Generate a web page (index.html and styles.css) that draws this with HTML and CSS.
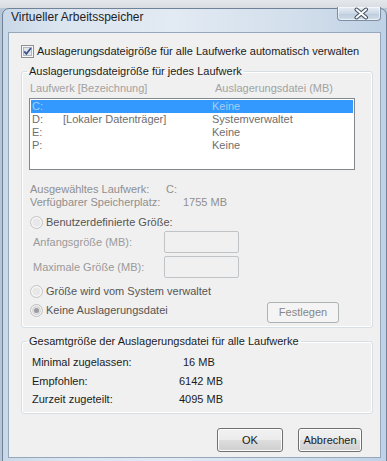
FILE: index.html
```html
<!DOCTYPE html>
<html lang="de">
<head>
<meta charset="UTF-8">
<meta name="viewport" content="width=device-width, initial-scale=1.0">
<title>Virtueller Arbeitsspeicher</title>
<link rel="stylesheet" href="styles.css">
</head>
<body>
<div class="window">
  <div class="titlebar">
    <span class="title">Virtueller Arbeitsspeicher</span>
    <div class="close-btn">
      <svg width="44" height="14" viewBox="0 0 44 14">
        <path d="M19.5 2.5 L29 10.5 M29 2.5 L19.5 10.5" stroke="#3d4c5e" stroke-width="4" stroke-linecap="round"/>
        <path d="M19.5 2.5 L29 10.5 M29 2.5 L19.5 10.5" stroke="#fff" stroke-width="2" stroke-linecap="round"/>
      </svg>
    </div>
  </div>

  <div class="client">
    <div class="check-row">
      <svg class="checkbox" width="13" height="13" viewBox="0 0 13 13">
        <rect x="0.5" y="0.5" width="12" height="12" fill="#f7f7f7" stroke="#8e8f8f"/>
        <rect x="2.5" y="2.5" width="8" height="8" fill="#e2e5ea" stroke="#b4b8be"/>
        <path d="M3.2 6.3 L5.4 8.9 L10 3" fill="none" stroke="#3e5490" stroke-width="1.8"/>
      </svg>
      <span>Auslagerungsdateigröße für alle Laufwerke automatisch verwalten</span>
    </div>

    <fieldset class="group drives">
      <legend>Auslagerungsdateigröße für jedes Laufwerk</legend>
      <div class="list-head">
        <span class="head-drive">Laufwerk [Bezeichnung]</span>
        <span>Auslagerungsdatei (MB)</span>
      </div>
      <div class="listbox">
        <div class="row selected"><span class="c-letter">C:</span><span class="c-label"></span><span>Keine</span></div>
        <div class="row"><span class="c-letter">D:</span><span class="c-label">[Lokaler Datenträger]</span><span>Systemverwaltet</span></div>
        <div class="row"><span class="c-letter">E:</span><span class="c-label"></span><span>Keine</span></div>
        <div class="row"><span class="c-letter">P:</span><span class="c-label"></span><span>Keine</span></div>
      </div>

      <div class="info">
        <div><span class="lbl-drive">Ausgewähltes Laufwerk:</span>C:</div>
        <div><span class="lbl-space">Verfügbarer Speicherplatz:</span>1755 MB</div>
      </div>

      <div class="radio-row custom">
        <svg class="radio" width="13" height="13" viewBox="0 0 13 13">
          <circle cx="6.5" cy="6.5" r="6" fill="#f5f5f5" stroke="#c3c3c3"/>
          <circle cx="6.5" cy="6.5" r="4" fill="#e8e8e8"/>
        </svg>
        <span>Benutzerdefinierte Größe:</span>
      </div>
      <div class="size-row first">
        <span class="size-label">Anfangsgröße (MB):</span>
        <span class="textbox"></span>
      </div>
      <div class="size-row">
        <span class="size-label">Maximale Größe (MB):</span>
        <span class="textbox"></span>
      </div>
      <div class="radio-row system">
        <svg class="radio" width="13" height="13" viewBox="0 0 13 13">
          <circle cx="6.5" cy="6.5" r="6" fill="#f5f5f5" stroke="#c3c3c3"/>
          <circle cx="6.5" cy="6.5" r="4" fill="#e8e8e8"/>
        </svg>
        <span>Größe wird vom System verwaltet</span>
      </div>
      <div class="radio-row none">
        <svg class="radio" width="13" height="13" viewBox="0 0 13 13">
          <circle cx="6.5" cy="6.5" r="6" fill="#f5f5f5" stroke="#bdbdbd"/>
          <circle cx="6.5" cy="6.5" r="4" fill="#e4e4e4" stroke="#d0d0d0"/>
          <circle cx="6.5" cy="6.5" r="2.5" fill="#9c9c9c"/>
        </svg>
        <span>Keine Auslagerungsdatei</span>
        <span class="btn disabled set-btn">Festlegen</span>
      </div>
    </fieldset>

    <fieldset class="group totals">
      <legend>Gesamtgröße der Auslagerungsdatei für alle Laufwerke</legend>
      <div class="total-row"><span class="total-label">Minimal zugelassen:</span><span class="min-val">16 MB</span></div>
      <div class="total-row"><span class="total-label">Empfohlen:</span><span>6142 MB</span></div>
      <div class="total-row"><span class="total-label">Zurzeit zugeteilt:</span><span>4095 MB</span></div>
    </fieldset>

    <div class="buttons">
      <span class="btn ok-btn">OK</span>
      <span class="btn cancel-btn">Abbrechen</span>
    </div>
  </div>
</div>
</body>
</html>
```

FILE: styles.css
```css
body {
  margin: 0;
  width: 387px;
  height: 461px;
  overflow: hidden;
  background: linear-gradient(#e4e7ea 0, #d9dde2 8px, #b7c6d6 8px);
  font-family: "Liberation Sans", Arial, sans-serif;
  font-size: 11px;
  color: #1c1c1c;
}

/* Fensterrahmen */
.window {
  margin: 8px 0 0 2px;
  width: 373px;
  height: 470px;
  padding: 0 5px;
  border: 1px solid #6f8297;
  border-radius: 7px 7px 0 0;
  background: linear-gradient(to right, #c9d8e8, #dbe5f0 15%, #e2eaf3 45%, #d3dfec 75%, #bfd1e5);
}
.titlebar {
  height: 23px;
  display: flex;
  align-items: flex-start;
}
.title {
  padding-left: 3px;
  line-height: 16px;
  font-size: 12px;
  color: #1e1e1e;
}
.close-btn {
  margin-left: auto;
  margin-top: -2px;
  width: 42px;
  height: 13px;
  border: 1px solid #7d8ea3;
  border-top: none;
  border-radius: 0 0 4px 4px;
  background: linear-gradient(#e8eef5, #cbd8e6 50%, #bccbdc 51%, #d2deea);
  box-shadow: inset 0 0 0 1px rgba(255, 255, 255, 0.6);
}
.close-btn svg {
  display: block;
  margin-left: -1px;
}

/* Clientbereich */
.client {
  height: 426px;
  box-sizing: border-box;
  border: 1px solid #94a7bc;
  background: #f0f0f0;
  padding: 12px 7px 0 12px;
}
.check-row {
  display: flex;
  align-items: center;
  gap: 3px;
  height: 13px;
  line-height: 13px;
}
.checkbox,
.radio {
  display: block;
  flex: none;
}

.group {
  margin: 6px 0 0 0;
  min-width: 0;
  border: 1px solid #d5dfe5;
  border-radius: 3px;
  box-shadow: inset 0 0 0 1px #fff;
  padding: 4px 0 4px 7px;
}
.group legend {
  padding: 0 2px;
  margin-left: -2px;
  line-height: 14px;
  color: #1c1c1c;
}

.list-head {
  display: flex;
  padding-left: 1px;
  line-height: 13px;
  color: #a2a2a2;
}
.head-drive {
  width: 185px;
}
.listbox {
  margin-top: 3px;
  width: 326px;
  height: 72px;
  box-sizing: border-box;
  border: 1px solid #828790;
  background: #fff;
  padding: 1px;
}
.row {
  display: flex;
  height: 13px;
  line-height: 13px;
  padding-left: 1px;
  color: #6e6e6e;
}
.row.selected {
  background: #3399ff;
  color: #a9cdf3;
}
.c-letter {
  width: 31px;
}
.c-label {
  width: 149px;
}

.info {
  margin-top: 13px;
  padding-left: 1px;
  line-height: 13px;
  color: #8f8f8f;
}
.info div {
  display: flex;
}
.lbl-drive {
  width: 136px;
}
.lbl-space {
  width: 153px;
}

.radio-row {
  display: flex;
  align-items: center;
  gap: 3px;
  height: 13px;
  line-height: 13px;
  padding-left: 1px;
  color: #555;
}
.radio-row.custom {
  margin-top: 7px;
}
.radio-row.system {
  margin-top: 7px;
}
.radio-row.none {
  margin-top: 4px;
  height: 21px;
  align-items: flex-start;
}
.radio-row.none .radio {
  margin-top: 2px;
}
.radio-row.none > span:first-of-type {
  margin-top: 2px;
}

.size-row {
  display: flex;
  align-items: center;
  height: 22px;
  margin-top: 3px;
  padding-left: 4px;
  color: #9a9a9a;
}
.size-row.first {
  margin-top: 2px;
}
.size-label {
  width: 131px;
}
.textbox {
  width: 75px;
  height: 22px;
  box-sizing: border-box;
  border: 1px solid #c1c4c7;
  border-radius: 2px;
  background: #f0f0f0;
}

.btn {
  display: flex;
  align-items: center;
  justify-content: center;
  box-sizing: border-box;
  border: 1px solid #707070;
  border-radius: 3px;
  background: linear-gradient(#f2f2f2, #ebebeb 50%, #dddddd 51%, #cfcfcf);
  box-shadow: inset 0 0 0 1px #fcfcfc;
  color: #1c1c1c;
}
.btn.disabled {
  border-color: #adb2b5;
  background: #f4f4f4;
  box-shadow: none;
  color: #868686;
}
.set-btn {
  margin-left: auto;
  margin-right: 33px;
  width: 72px;
  height: 21px;
}

.total-row {
  display: flex;
  line-height: 18.5px;
  padding-left: 3px;
}
.totals {
  padding-top: 5px;
}
.total-label {
  width: 147px;
}
.min-val {
  padding-left: 4px;
}

.buttons {
  display: flex;
  justify-content: flex-end;
  gap: 15px;
  margin-top: 14px;
  margin-right: 11px;
}
.ok-btn {
  width: 66px;
  height: 24px;
}
.cancel-btn {
  width: 64px;
  height: 24px;
}
```
